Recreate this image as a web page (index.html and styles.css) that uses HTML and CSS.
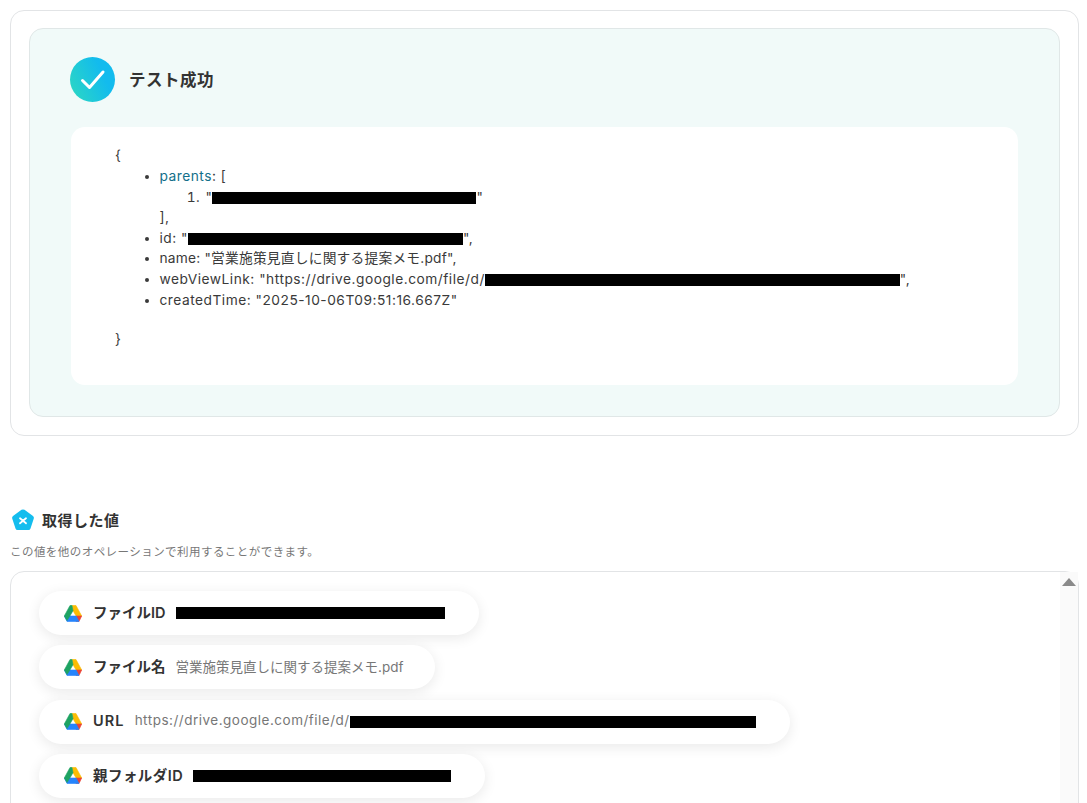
FILE: index.html
```html
<!DOCTYPE html>
<html lang="ja">
<head>
<meta charset="utf-8">
<title>テスト成功</title>
<link rel="stylesheet" href="styles.css">
</head>
<body>
<svg class="defs" width="0" height="0" aria-hidden="true">
  <symbol id="drive" viewBox="0 0 18 17">
    <g stroke-width="0.6" stroke-linejoin="round">
      <path d="M8 .5 H12 L17.700 11 H12.100 L9 5.700 Z" fill="#fbbc04" stroke="#fbbc04"/>
      <path d="M12.100 11 H17.700 L15 16.500 H12 Z" fill="#ea4335" stroke="#ea4335"/>
      <path d="M5.900 11 H12.100 L15 16.500 H3 L.3 11 Z" fill="#2684fc" stroke="#2684fc"/>
      <path d="M6 .5 H8 L9 5.700 L5.900 11 L3 15.500 L.3 11 Z" fill="#1ea362" stroke="#1ea362"/>
    </g>
  </symbol>
</svg>
<main class="page">
  <section class="card">
    <div class="result">
      <header class="result-head">
        <span class="check">
          <svg width="26" height="26" viewBox="0 0 26 26"><path d="M2.500 13.500 L9.500 20.500 L23 5" fill="none" stroke="#fff" stroke-width="3" stroke-linecap="round" stroke-linejoin="round"/></svg>
        </span>
        <h2 class="result-title">テスト成功</h2>
      </header>
      <div class="json">
        <p class="brace">{</p>
        <ul class="keys">
          <li><span class="key-link">parents</span>: [
            <ol class="nested"><li>"<span class="redact r-parent"></span>"</li></ol>
            ],
          </li>
          <li>id: "<span class="redact r-id"></span>",</li>
          <li class="key-jp">name: "営業施策見直しに関する提案メモ.pdf",</li>
          <li>webViewLink: "https://drive.google.com/file/d/<span class="redact r-web"></span>",</li>
          <li>createdTime: "2025-10-06T09:51:16.667Z"</li>
        </ul>
        <p class="brace brace-end">}</p>
      </div>
    </div>
  </section>

  <section class="values">
    <h3 class="values-title">
      <svg class="pentagon" width="24" height="24" viewBox="0 0 24 24"><path d="M10.500 1.800 Q12 1 13.500 1.800 L22 8 Q23.300 9 22.800 10.500 L19.500 20.500 Q19 22 17.400 22 H6.600 Q5 22 4.500 20.500 L1.200 10.500 Q0.700 9 2 8 Z" fill="#14bdee"/><path d="M9 10.300 L15 15.300 M15 10.300 L9 15.300" stroke="#fff" stroke-width="1.800" stroke-linecap="round"/></svg>
      取得した値
    </h3>
    <p class="values-note">この値を他のオペレーションで利用することができます。</p>
    <div class="box">
      <div class="pills">
        <div class="pill">
          <svg class="drive"><use href="#drive"/></svg>
          <span class="pill-label">ファイルID</span>
          <span class="redact r-fileid"></span>
        </div>
        <div class="pill pill-name">
          <svg class="drive"><use href="#drive"/></svg>
          <span class="pill-label">ファイル名</span>
          <span class="pill-value value-jp">営業施策見直しに関する提案メモ.pdf</span>
        </div>
        <div class="pill">
          <svg class="drive"><use href="#drive"/></svg>
          <span class="pill-label label-url">URL</span>
          <span class="pill-value value-url">https://drive.google.com/file/d/</span><span class="redact r-url"></span>
        </div>
        <div class="pill">
          <svg class="drive"><use href="#drive"/></svg>
          <span class="pill-label label-folder">親フォルダID</span>
          <span class="redact r-folder"></span>
        </div>
      </div>
      <div class="scrollbar"><span class="arrow"></span></div>
    </div>
  </section>
</main>
</body>
</html>
```
FILE: styles.css
```css
* { box-sizing: border-box; }
html, body { margin: 0; height: 803px; overflow: hidden; background: #fff; }
body { font-family: Inter, "Noto Sans CJK JP", sans-serif; color: #2a2a2a; }
.defs { position: absolute; }
.page { padding: 10px 8px 0 10px; }

.card { height: 426px; padding: 17px 18px 18px 18px; border: 1px solid #e2e4e6; border-radius: 14px; }
.result { height: 389px; padding: 28px 41px 0 40px; background: #f1faf9; border: 1px solid #e0e7e7; border-radius: 14px; }
.result-head { display: flex; align-items: center; gap: 14px; height: 45px; }
.check { width: 45px; height: 45px; border-radius: 50%; display: flex; align-items: center; justify-content: center; background: linear-gradient(65deg, #2ed9c0 0%, #12bbee 70%); }
.result-title { margin: 0 0 2px; font-size: 16.500px; letter-spacing: 0.5px; font-weight: 600; color: #333; }

.json { margin: 25px 0 0 1px; height: 258px; padding: 18.300px 44px 0; background: #fff; border-radius: 14px; font-size: 13.750px; letter-spacing: 0.5px; line-height: 20.625px; color: #3a3a3a; }
.brace { margin: 0; }
.brace-end { margin-top: 18.600px; }
.keys { margin: 0; padding: 0 0 0 44.500px; }
.key-link { color: #136f8a; }
.key-jp { letter-spacing: 0.2px; }
.nested { margin: 0; padding: 0 0 0 45px; }
.nested li { padding-left: 1px; }
.redact { display: inline-block; height: 12px; background: #000; vertical-align: -2px; }
.r-parent { width: 264px; }
.r-id { width: 275px; }
.r-web { width: 415px; }
.r-fileid { width: 269px; }
.r-url { width: 406px; }
.r-folder { width: 258px; }

.values { margin-top: 70px; }
.values-title { margin: 0; display: flex; align-items: center; gap: 7px; height: 27px; padding-left: 1px; font-size: 15px; letter-spacing: 0.5px; font-weight: 600; color: #333; }
.values-note { margin: 11px 0 0; font-size: 11.500px; letter-spacing: 0.45px; line-height: 16px; color: #777; }
.box { margin-top: 11px; position: relative; height: 261px; border: 1px solid #e2e4e6; border-radius: 14px 14px 0 0; }
.pills { display: flex; flex-direction: column; align-items: flex-start; gap: 10.330px; padding: 19px 0 0 28px; }
.pill { display: flex; align-items: center; height: 44px; padding: 0 34px 0 25px; background: #fff; border-radius: 22px; box-shadow: 0 3px 14px rgba(0, 0, 0, 0.09); }
.pill-name { padding-right: 32px; }
.drive { flex: none; width: 18px; height: 17px; margin-right: 11px; }
.pill-label { font-size: 14.500px; font-weight: 600; color: #333; margin: 0 10px 3px 0; }
.label-url { letter-spacing: 1.100px; margin-right: 10px; }
.label-folder { letter-spacing: 0.450px; }
.pill-value { font-size: 13.500px; color: #777; margin-bottom: 3px; }
.value-jp { letter-spacing: 0; }
.value-url { letter-spacing: 0.5px; }
.scrollbar { position: absolute; top: 0; right: 0; width: 18px; height: 100%; background: #fafafa; display: flex; justify-content: center; padding-top: 6px; }
.arrow { width: 0; height: 0; border-left: 7px solid transparent; border-right: 7px solid transparent; border-bottom: 8px solid #8a8a8a; }
```
